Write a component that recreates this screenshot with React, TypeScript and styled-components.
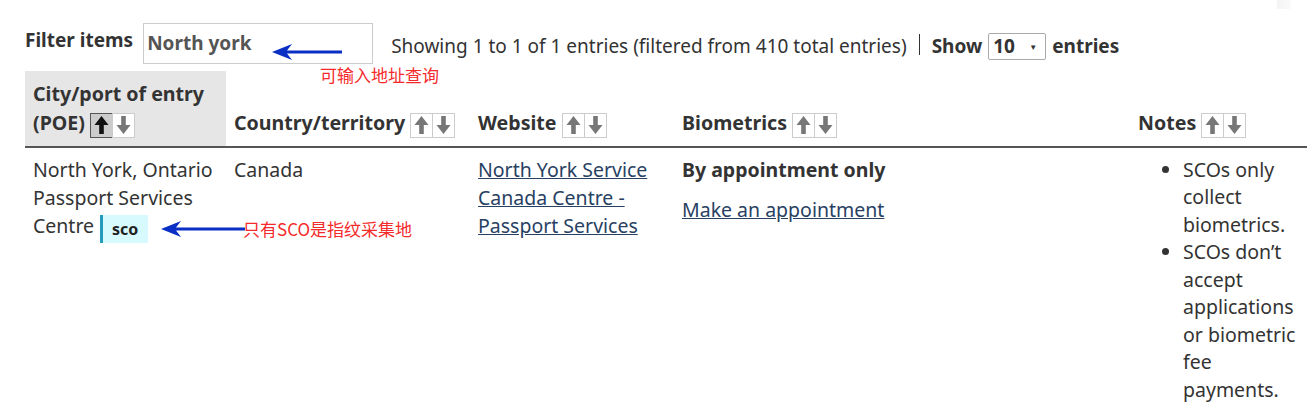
import styled, { createGlobalStyle } from 'styled-components'

const GlobalStyle = createGlobalStyle`
  html, body {
    margin: 0;
    padding: 0;
    background: #fff;
    font-family: "Noto Sans", "Open Sans", sans-serif;
    color: #333;
  }
`

type SortState = 'asc' | 'none'

type Column = {
  label: string;
  width: number;
  sort: SortState;
}

const columns: Column[] = [
  { label: 'City/port of entry (POE)', width: 201, sort: 'asc' },
  { label: 'Country/territory', width: 244, sort: 'none' },
  { label: 'Website', width: 204, sort: 'none' },
  { label: 'Biometrics', width: 456, sort: 'none' },
  { label: 'Notes', width: 177, sort: 'none' },
]

function Arrow({ up }: { up: boolean }) {
  return (
    <svg width="15" height="20" viewBox="0 0 15 20">
      {up ? (
        <path d="M7.5 1 L14.5 10 L9.8 10 L9.8 19 L5.2 19 L5.2 10 L0.5 10 Z" fill="currentColor" />
      ) : (
        <path d="M7.5 19 L14.5 10 L9.8 10 L9.8 1 L5.2 1 L5.2 10 L0.5 10 Z" fill="currentColor" />
      )}
    </svg>
  )
}

export default function App() {
  return (
    <Page>
      <GlobalStyle />
      <TopShade />
      <Toolbar>
        <FilterLabel>Filter items</FilterLabel>
        <FilterInput defaultValue="North york" />
        <Info>Showing 1 to 1 of 1 entries (filtered from 410 total entries)</Info>
        <Divider />
        <LengthLabel>
          Show
          <Select>
            <span>10</span>
            <Caret>▼</Caret>
          </Select>
          entries
        </LengthLabel>
      </Toolbar>

      <Table>
        <colgroup>
          {columns.map((c) => (
            <col key={c.label} style={{ width: c.width }} />
          ))}
        </colgroup>
        <thead>
          <tr>
            {columns.map((c) => (
              <Th key={c.label} $active={c.sort === 'asc'}>
                {c.label}{' '}
                <SortGroup>
                  <SortBtn $active={c.sort === 'asc'}><Arrow up /></SortBtn>
                  <SortBtn $active={false}><Arrow up={false} /></SortBtn>
                </SortGroup>
              </Th>
            ))}
          </tr>
        </thead>
        <tbody>
          <tr>
            <Td>
              North York, Ontario Passport Services Centre<Badge>sco</Badge>
            </Td>
            <Td>Canada</Td>
            <Td>
              <Link href="#">North York Service Canada Centre - Passport Services</Link>
            </Td>
            <Td>
              <strong>By appointment only</strong>
              <Para>
                <Link href="#">Make an appointment</Link>
              </Para>
            </Td>
            <Td>
              <Notes>
                <li>SCOs only collect biometrics.</li>
                <li>SCOs don’t accept applications or biometric fee payments.</li>
              </Notes>
            </Td>
          </tr>
        </tbody>
      </Table>

      <Note $x={272} $y={43} $width={70}>
        <BlueArrow width={70} />
      </Note>
      <NoteText $x={320} $y={64}>可输入地址查询</NoteText>

      <Note $x={161} $y={220} $width={84}>
        <BlueArrow width={84} />
      </Note>
      <NoteText $x={243} $y={218}>只有SCO是指纹采集地</NoteText>
    </Page>
  )
}

function BlueArrow({ width }: { width: number }) {
  return (
    <svg width={width} height="18" viewBox={`0 0 ${width} 18`}>
      <path d={`M0 9 L20 1 L15 7.5 L${width} 7.5 L${width} 10.5 L15 10.5 L20 17 Z`} fill="#0a2fc4" />
    </svg>
  )
}

const Page = styled.div`
  position: relative;
  padding: 22px 0 0 25px;
  width: 1282px;
`

const TopShade = styled.div`
  position: absolute;
  top: 0;
  left: 1277px;
  width: 14px;
  height: 9px;
  background: linear-gradient(to right, #f4f4f4, #fafafa);
`

const Toolbar = styled.div`
  display: flex;
  align-items: center;
  height: 42px;
  margin-bottom: 7px;
  font-size: 19px;
`

const FilterLabel = styled.label`
  font-weight: 700;
  margin-right: 10px;
  margin-top: -6px;
  white-space: nowrap;
`

const FilterInput = styled.input`
  box-sizing: border-box;
  width: 230px;
  height: 41px;
  border: 1px solid #ccc;
  padding: 0 3px 0;
  font-family: "Noto Sans", sans-serif;
  font-size: 19px;
  font-weight: 700;
  color: #555;
  outline: none;
`

const Info = styled.div`
  color: #333;
  margin-left: 18px;
  margin-top: 6px;
  white-space: nowrap;
`

const Divider = styled.span`
  width: 1px;
  height: 21px;
  background: #333;
  margin: 2px 12px 0 12px;
`

const LengthLabel = styled.div`
  display: flex;
  align-items: center;
  gap: 6px;
  font-weight: 700;
  margin-top: 6px;
`

const Select = styled.div`
  box-sizing: border-box;
  display: flex;
  align-items: center;
  justify-content: space-between;
  width: 58px;
  height: 27px;
  padding: 0 8px 0 4px;
  border: 1px solid #aaa;
  border-radius: 2px;
  font-weight: 700;
`

const Caret = styled.span`
  font-size: 8px;
  color: #333;
`

const Table = styled.table`
  border-collapse: collapse;
  table-layout: fixed;
  width: 1282px;
`

const Th = styled.th<{ $active: boolean }>`
  text-align: left;
  vertical-align: bottom;
  font-size: 19.6px;
  font-weight: 700;
  line-height: 29px;
  color: #333;
  padding: 8px 8px 8px;
  background: ${(p) => (p.$active ? '#e6e6e6' : 'transparent')};
  border-bottom: 2px solid #555;
`

const SortGroup = styled.span`
  display: inline-flex;
  vertical-align: -5px;
`

const SortBtn = styled.span<{ $active: boolean }>`
  box-sizing: border-box;
  display: inline-flex;
  align-items: center;
  justify-content: center;
  width: 23px;
  height: 25px;
  border: 1px solid ${(p) => (p.$active ? '#555' : '#ccc')};
  background: ${(p) => (p.$active ? '#ccc' : '#fff')};
  color: ${(p) => (p.$active ? '#111' : '#777')};
  & + & {
    margin-left: -1px;
  }
`

const Td = styled.td`
  vertical-align: top;
  font-size: 19.5px;
  line-height: 28px;
  color: #333;
  padding: 8px 8px;
`

const Link = styled.a`
  color: #284162;
  text-decoration: underline;
`

const Para = styled.p`
  margin: 12px 0 0;
`

const Badge = styled.span`
  display: inline-block;
  margin-left: 6px;
  background: #d7faff;
  border-left: 3px solid #269abc;
  padding: 0 10px 0 9px;
  font-size: 16px;
  font-weight: 700;
  line-height: 28px;
  color: #222;
  vertical-align: -2px;
`

const Notes = styled.ul`
  margin: 0;
  padding-left: 45px;
  li {
    line-height: 27.5px;
  }
`

const Note = styled.div<{ $x: number; $y: number; $width: number }>`
  position: absolute;
  left: ${(p) => p.$x}px;
  top: ${(p) => p.$y}px;
  width: ${(p) => p.$width}px;
  height: 18px;
  display: flex;
`

const NoteText = styled.div<{ $x: number; $y: number }>`
  position: absolute;
  left: ${(p) => p.$x}px;
  top: ${(p) => p.$y}px;
  font-family: "Noto Sans CJK SC", "Noto Sans", sans-serif;
  font-size: 17px;
  line-height: 22px;
  color: #f52a2a;
  white-space: nowrap;
`
